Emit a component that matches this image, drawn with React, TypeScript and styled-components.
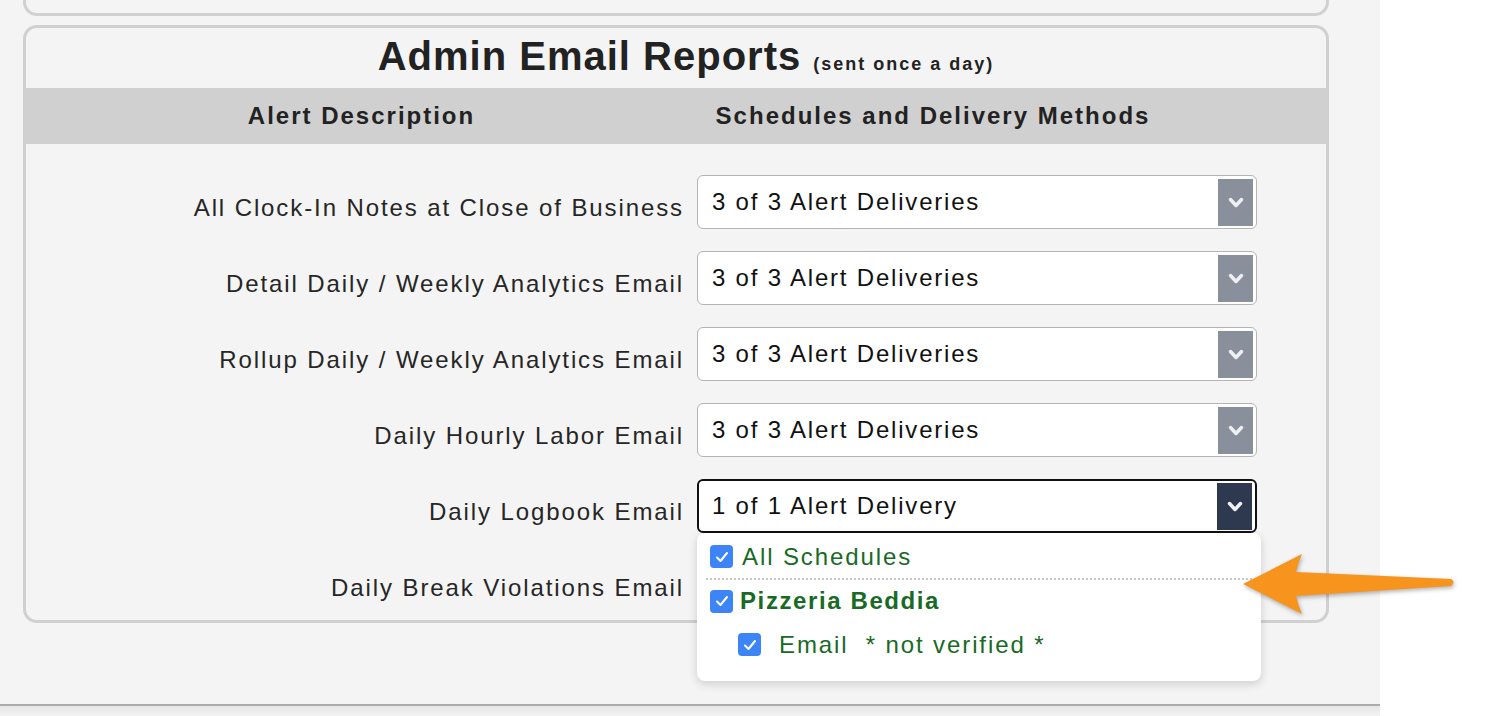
import React from "react";
import styled, { createGlobalStyle } from "styled-components";

const GlobalStyle = createGlobalStyle`
  html, body {
    margin: 0;
    padding: 0;
    background: #ffffff;
  }
  body {
    font-family: "Liberation Sans", Arial, Helvetica, sans-serif;
    color: #222;
    overflow: hidden;
  }
`;

const Page = styled.div`
  position: relative;
  display: flex;
  width: 1496px;
  height: 716px;
  overflow: hidden;
`;

const Main = styled.div`
  width: 1380px;
  height: 716px;
  background: #f4f4f4;
  display: flex;
  flex-direction: column;
`;

const PrevCard = styled.div`
  margin-left: 23px;
  width: 1300px;
  height: 13px;
  border: 3px solid #d0d0d0;
  border-top: none;
  border-radius: 0 0 14px 14px;
`;

const ReportCard = styled.section`
  margin: 9px 0 0 23px;
  width: 1300px;
  border: 3px solid #d0d0d0;
  border-radius: 14px;
`;

const Title = styled.h2`
  margin: 0;
  height: 60px;
  display: flex;
  align-items: flex-end;
  justify-content: center;
  gap: 12px;
  padding: 0 0 12px 20px;
  box-sizing: border-box;
  font-size: 40px;
  font-weight: bold;
  letter-spacing: 1px;
  color: #222;
  line-height: 1;
`;

const Small = styled.span`
  font-size: 18px;
  letter-spacing: 2px;
  padding-bottom: 3px;
`;

const HeaderBand = styled.div`
  display: grid;
  grid-template-columns: 671px 472px;
  height: 56px;
  align-items: center;
  background: #d0d0d0;
`;

const HeaderCell = styled.div`
  text-align: center;
  font-size: 24px;
  font-weight: bold;
  letter-spacing: 2px;
  color: #222;
`;

const Rows = styled.div`
  display: flex;
  flex-direction: column;
  gap: 22px;
  padding: 31px 0 11px;
`;

const Row = styled.div`
  display: grid;
  grid-template-columns: 658px 560px;
  column-gap: 13px;
  height: 54px;
`;

const Label = styled.div`
  text-align: right;
  font-size: 24px;
  letter-spacing: 1.9px;
  color: #262626;
  padding-top: 21px;
  line-height: 1;
`;

const SelectWrap = styled.div`
  position: relative;
`;

const SelectBox = styled.div<{ $open?: boolean }>`
  height: 54px;
  box-sizing: border-box;
  background: #fff;
  border: ${(p) => (p.$open ? "2px solid #111" : "1px solid #b4b4b4")};
  border-radius: 6px;
  display: flex;
  align-items: center;
  justify-content: space-between;
  padding: ${(p) => (p.$open ? "0 3px 0 13px" : "0 3px 0 14px")};
  font-size: 24px;
  letter-spacing: 1.8px;
  color: #111;
`;

const ArrowBox = styled.div<{ $open?: boolean }>`
  width: 35px;
  height: 47px;
  background: ${(p) => (p.$open ? "#2e3950" : "#8a8f9c")};
  display: flex;
  align-items: center;
  justify-content: center;
`;

const Menu = styled.div`
  position: absolute;
  top: 100%;
  left: 0;
  width: 564px;
  background: #fff;
  border-radius: 8px;
  box-shadow: 0 3px 10px rgba(0, 0, 0, 0.16);
  padding: 6px 9px 14px 13px;
  box-sizing: border-box;
  z-index: 2;
`;

const MenuItem = styled.div<{ $indent?: boolean; $bold?: boolean; $divided?: boolean }>`
  display: flex;
  align-items: center;
  height: ${(p) => (p.$divided ? "35px" : p.$bold ? "42px" : "45px")};
  padding-bottom: ${(p) => (p.$divided ? "4px" : "0")};
  gap: ${(p) => (p.$indent ? "18px" : p.$bold ? "7px" : "9px")};
  font-size: 24px;
  font-weight: ${(p) => (p.$bold ? "bold" : "normal")};
  letter-spacing: ${(p) => (p.$bold ? "1.6px" : "1.9px")};
  color: #186a25;
  white-space: pre;
  border-bottom: ${(p) => (p.$divided ? "2px dotted #c8c8c8" : "none")};
  margin-left: ${(p) => (p.$divided ? "-4px" : "0")};
  padding-left: ${(p) => (p.$divided ? "4px" : p.$indent ? "28px" : "0")};
`;

const Check = styled.span`
  width: 23px;
  height: 23px;
  border-radius: 4px;
  background: #3d85f6;
  display: inline-flex;
  align-items: center;
  justify-content: center;
  flex: none;
`;

const Footer = styled.div`
  margin-top: auto;
  height: 10px;
  border-top: 2px solid #acacac;
  background: linear-gradient(#e6e6e6, #f2f2f2);
`;

const Side = styled.div`
  flex: 1;
  background: #fff;
`;

const Pointer = styled.svg`
  position: absolute;
  left: 1235px;
  top: 545px;
  filter: drop-shadow(1px 2px 2px rgba(0, 0, 0, 0.3));
  z-index: 3;
`;

const Chevron = () => (
  <svg width="16" height="11" viewBox="0 0 16 11">
    <path d="M2.5 2.5 L8 8.5 L13.5 2.5" fill="none" stroke="#eef0f4" strokeWidth="3.5" strokeLinecap="round" strokeLinejoin="round" />
  </svg>
);

const Tick = () => (
  <Check>
    <svg width="14" height="12" viewBox="0 0 14 12">
      <path d="M2 6.5 L5.5 10 L12 2" fill="none" stroke="#fff" strokeWidth="2" strokeLinecap="round" strokeLinejoin="round" />
    </svg>
  </Check>
);

const reports = [
  { label: "All Clock-In Notes at Close of Business", value: "3 of 3 Alert Deliveries" },
  { label: "Detail Daily / Weekly Analytics Email", value: "3 of 3 Alert Deliveries" },
  { label: "Rollup Daily / Weekly Analytics Email", value: "3 of 3 Alert Deliveries" },
  { label: "Daily Hourly Labor Email", value: "3 of 3 Alert Deliveries" },
  { label: "Daily Logbook Email", value: "1 of 1 Alert Delivery", open: true },
  { label: "Daily Break Violations Email", value: "1 of 1 Alert Delivery" },
];

export default function App() {
  return (
    <>
      <GlobalStyle />
      <Page>
        <Main>
          <PrevCard />
          <ReportCard>
            <Title>
              Admin Email Reports <Small>(sent once a day)</Small>
            </Title>
            <HeaderBand>
              <HeaderCell>Alert Description</HeaderCell>
              <HeaderCell>Schedules and Delivery Methods</HeaderCell>
            </HeaderBand>
            <Rows>
              {reports.map((r) => (
                <Row key={r.label}>
                  <Label>{r.label}</Label>
                  <SelectWrap>
                    <SelectBox $open={r.open}>
                      <span>{r.value}</span>
                      <ArrowBox $open={r.open}>
                        <Chevron />
                      </ArrowBox>
                    </SelectBox>
                    {r.open && (
                      <Menu>
                        <MenuItem $divided>
                          <Tick />
                          All Schedules
                        </MenuItem>
                        <MenuItem $bold>
                          <Tick />
                          Pizzeria Beddia
                        </MenuItem>
                        <MenuItem $indent>
                          <Tick />
                          {"Email  * not verified *"}
                        </MenuItem>
                      </Menu>
                    )}
                  </SelectWrap>
                </Row>
              ))}
            </Rows>
          </ReportCard>
          <Footer />
        </Main>
        <Side />
        <Pointer width="230" height="80" viewBox="0 0 230 80">
          <path
            d="M8 39 L67 9 Q63 18 61 27 L216 34 Q221 37 216 41 L61 51 Q63 60 67 69 Z"
            fill="#f7941d"
          />
        </Pointer>
      </Page>
    </>
  );
}
